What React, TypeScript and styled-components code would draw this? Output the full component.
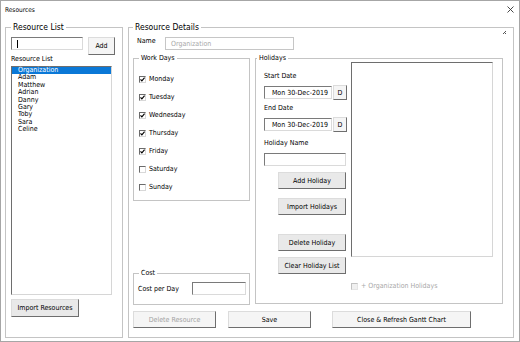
import styled, { createGlobalStyle } from "styled-components";

const GlobalStyle = createGlobalStyle`
    body {
        margin: 0;
        background: #ffffff;
        font-family: "DejaVu Sans Condensed", "DejaVu Sans", sans-serif;
        color: #000;
    }
`;

const Window = styled.div`
    width: 520px;
    height: 342px;
    box-sizing: border-box;
    border: 1px solid #a6a6a6;
    background: #ffffff;
    display: flex;
    flex-direction: column;
    font-size: 7px;
    line-height: 8px;
`;

const TitleBar = styled.div`
    height: 17px;
    display: flex;
    align-items: center;
    justify-content: space-between;
    padding: 0 5px 0 4px;
    font-size: 6.5px;
`;

const Body = styled.div`
    display: flex;
    gap: 5px;
    padding: 9px 0 0 4px;
`;

// VBA style frame: grey line with the caption sitting on it
const Frame = styled.div<{ $w: number; $h: number }>`
    position: relative;
    box-sizing: border-box;
    width: ${(p) => p.$w}px;
    height: ${(p) => p.$h}px;
    border: 1px solid #c4c4c4;
    display: flex;
    flex-direction: column;
    flex-shrink: 0;
`;

const Caption = styled.span<{ $big?: boolean; $left?: number }>`
    position: absolute;
    top: ${(p) => (p.$big ? -6 : -5)}px;
    left: ${(p) => p.$left ?? 5}px;
    padding: 0 2px;
    background: #ffffff;
    font-size: ${(p) => (p.$big ? 8.5 : 7)}px;
    line-height: ${(p) => (p.$big ? 10 : 8)}px;
    white-space: nowrap;
`;

const Grip = styled.svg`
    position: absolute;
    top: 3px;
    right: 7px;
`;

const Column = styled.div<{ $pl?: number }>`
    display: flex;
    flex-direction: column;
    padding-left: ${(p) => p.$pl ?? 0}px;
`;

const Row = styled.div<{ $mt?: number; $ml?: number }>`
    display: flex;
    align-items: flex-start;
    margin-top: ${(p) => p.$mt ?? 0}px;
    margin-left: ${(p) => p.$ml ?? 0}px;
`;

const Label = styled.div<{ $mt?: number; $w?: number }>`
    margin-top: ${(p) => p.$mt ?? 0}px;
    width: ${(p) => (p.$w ? `${p.$w}px` : "auto")};
    white-space: nowrap;
`;

const TextBox = styled.div<{ $w: number; $h?: number; $mt?: number; $ml?: number; $disabled?: boolean; $right?: boolean }>`
    box-sizing: border-box;
    width: ${(p) => p.$w}px;
    height: ${(p) => p.$h ?? 13}px;
    margin-top: ${(p) => p.$mt ?? 0}px;
    margin-left: ${(p) => p.$ml ?? 0}px;
    border: 1px solid;
    border-color: ${(p) => (p.$disabled ? "#c6c6c6" : "#7a7a7a #dadada #dadada #7a7a7a")};
    background: #ffffff;
    color: ${(p) => (p.$disabled ? "#a8a8a8" : "#000")};
    display: flex;
    align-items: center;
    justify-content: ${(p) => (p.$right ? "flex-end" : "flex-start")};
    padding: 0 ${(p) => (p.$right ? 3 : 0)}px 0 ${(p) => (p.$right ? 0 : 5)}px;
    white-space: nowrap;
    flex-shrink: 0;
`;

const Caret = styled.span`
    width: 1px;
    height: 8px;
    background: #000;
`;

const Button = styled.button<{ $w: number; $h?: number; $mt?: number; $ml?: number; $light?: boolean; $disabled?: boolean }>`
    box-sizing: border-box;
    width: ${(p) => p.$w}px;
    height: ${(p) => p.$h ?? 17}px;
    margin: ${(p) => p.$mt ?? 0}px 0 0 ${(p) => p.$ml ?? 0}px;
    padding: 0;
    flex-shrink: 0;
    font-family: inherit;
    font-size: 7px;
    line-height: 8px;
    color: ${(p) => (p.$disabled ? "#a3a3a3" : "#000")};
    background: ${(p) => (p.$light ? "#f5f5f5" : "#e9e9e9")};
    border: 1px solid;
    border-color: #dcdcdc #6e6e6e #6e6e6e #dcdcdc;
    white-space: nowrap;
`;

const ListBox = styled.div<{ $w: number; $h: number; $mt?: number }>`
    box-sizing: border-box;
    width: ${(p) => p.$w}px;
    height: ${(p) => p.$h}px;
    margin-top: ${(p) => p.$mt ?? 0}px;
    border: 1px solid;
    border-color: #6e6e6e #d6d6d6 #d6d6d6 #6e6e6e;
    background: #ffffff;
    display: flex;
    flex-direction: column;
`;

const ListItem = styled.div<{ $selected?: boolean }>`
    height: 7.4px;
    line-height: 7.4px;
    padding-left: 6px;
    background: ${(p) => (p.$selected ? "#0a78d7" : "transparent")};
    color: ${(p) => (p.$selected ? "#fff" : "#000")};
`;

const CheckRow = styled.div<{ $h?: number; $mt?: number; $disabled?: boolean }>`
    display: flex;
    align-items: center;
    gap: 3px;
    height: ${(p) => p.$h ?? 18}px;
    margin-top: ${(p) => p.$mt ?? 0}px;
    color: ${(p) => (p.$disabled ? "#a8a8a8" : "#000")};
`;

const Box = styled.span<{ $disabled?: boolean }>`
    box-sizing: border-box;
    width: 7px;
    height: 7px;
    border: 1px solid;
    border-color: ${(p) => (p.$disabled ? "#c2c2c2 #e4e4e4 #e4e4e4 #c2c2c2" : "#6b6b6b #d8d8d8 #d8d8d8 #6b6b6b")};
    background: ${(p) => (p.$disabled ? "#f0f0f0" : "#fff")};
    display: flex;
    align-items: center;
    justify-content: center;
`;

const DaysList = styled.div`
    display: flex;
    flex-direction: column;
    padding: 11px 0 0 5px;
`;

const SideColumn = styled.div`
    display: flex;
    flex-direction: column;
    justify-content: space-between;
    width: 117px;
    height: 247px;
`;

function CheckBox({ label, checked, disabled, h, mt }: { label: string; checked?: boolean; disabled?: boolean; h?: number; mt?: number }) {
    return (
        <CheckRow $h={h} $mt={mt} $disabled={disabled}>
            <Box $disabled={disabled}>
                {checked && (
                    <svg width="5" height="5" viewBox="0 0 5 5">
                        <path d="M0.5 2.3 L1.9 3.9 L4.6 0.6" fill="none" stroke="#000" strokeWidth="1.2" />
                    </svg>
                )}
            </Box>
            {label}
        </CheckRow>
    );
}

const resources = ["Organization", "Adam", "Matthew", "Adrian", "Danny", "Gary", "Toby", "Sara", "Celine"];

const days: [string, boolean][] = [
    ["Monday", true],
    ["Tuesday", true],
    ["Wednesday", true],
    ["Thursday", true],
    ["Friday", true],
    ["Saturday", false],
    ["Sunday", false],
];

function App() {
    return (
        <Window>
            <GlobalStyle />
            <TitleBar>
                <span>Resources</span>
                <svg width="7" height="7" viewBox="0 0 7 7">
                    <path d="M0.5 0.5 L6.5 6.5 M6.5 0.5 L0.5 6.5" stroke="#333" strokeWidth="0.9" />
                </svg>
            </TitleBar>
            <Body>
                <Frame $w={118} $h={311}>
                    <Caption $big>Resource List</Caption>
                    <Column $pl={5}>
                        <Row $mt={9}>
                            <TextBox $w={72} $mt={0}>
                                <Caret />
                            </TextBox>
                            <Button $w={27} $h={18} $ml={5} $light>
                                Add
                            </Button>
                        </Row>
                        <Label $mt={0}>Resource List</Label>
                        <ListBox $w={101} $h={229} $mt={3}>
                            {resources.map((r, i) => (
                                <ListItem key={r} $selected={i === 0}>
                                    {r}
                                </ListItem>
                            ))}
                        </ListBox>
                        <Button $w={68} $h={18} $mt={4}>
                            Import Resources
                        </Button>
                    </Column>
                </Frame>

                <Frame $w={386} $h={311}>
                    <Caption $big $left={4}>Resource Details</Caption>
                    <Grip width="3" height="3" viewBox="0 0 3 3">
                        <path d="M2 0 H3 V1 H2 Z M1 1 H2 V2 H1 Z M0 2 H1 V3 H0 Z M2 2 H3 V3 H2 Z" fill="#555" />
                    </Grip>
                    <Column $pl={4}>
                        <Row $mt={9} $ml={4}>
                            <Label $w={28} $mt={0}>Name</Label>
                            <TextBox $w={129} $disabled>Organization</TextBox>
                        </Row>
                        <Row $mt={8}>
                            <SideColumn>
                                <Frame $w={117} $h={143}>
                                    <Caption>Work Days</Caption>
                                    <DaysList>
                                        {days.map(([d, c]) => (
                                            <CheckBox key={d} label={d} checked={c} />
                                        ))}
                                    </DaysList>
                                </Frame>
                                <Frame $w={117} $h={32}>
                                    <Caption>Cost</Caption>
                                    <Row $mt={8} $ml={4}>
                                        <Label $w={54} $mt={3}>Cost per Day</Label>
                                        <TextBox $w={54} />
                                    </Row>
                                </Frame>
                            </SideColumn>
                            <Frame $w={248} $h={246} style={{ marginLeft: 5 }}>
                                <Caption $left={1}>Holidays</Caption>
                                <Row>
                                    <Column style={{ marginLeft: 8, width: 82 }}>
                                        <Label $mt={13}>Start Date</Label>
                                        <Row $mt={5}>
                                            <TextBox $w={68} $mt={1} $right>Mon 30-Dec-2019</TextBox>
                                            <Button $w={14} $h={15} $ml={1} $light>D</Button>
                                        </Row>
                                        <Label $mt={4}>End Date</Label>
                                        <Row $mt={5}>
                                            <TextBox $w={68} $mt={1} $right>Mon 30-Dec-2019</TextBox>
                                            <Button $w={14} $h={15} $ml={1} $light>D</Button>
                                        </Row>
                                        <Label $mt={7}>Holiday Name</Label>
                                        <TextBox $w={82} $mt={6} />
                                        <Button $w={68} $mt={6} $ml={14}>Add Holiday</Button>
                                        <Button $w={68} $mt={9} $ml={14}>Import Holidays</Button>
                                        <Button $w={68} $mt={19} $ml={14}>Delete Holiday</Button>
                                        <Button $w={68} $mt={6} $ml={14}>Clear Holiday List</Button>
                                    </Column>
                                    <Column style={{ marginLeft: 5 }}>
                                        <ListBox $w={142} $h={195} $mt={3} />
                                        <CheckBox label="+ Organization Holidays" disabled h={10} mt={24} />
                                    </Column>
                                </Row>
                            </Frame>
                        </Row>
                        <Row $mt={6}>
                            <Button $w={83} $light $disabled>Delete Resource</Button>
                            <Button $w={83} $ml={12} $light>Save</Button>
                            <Button $w={139} $ml={21} $light>Close &amp; Refresh Gantt Chart</Button>
                        </Row>
                    </Column>
                </Frame>
            </Body>
        </Window>
    );
}

export default App;
